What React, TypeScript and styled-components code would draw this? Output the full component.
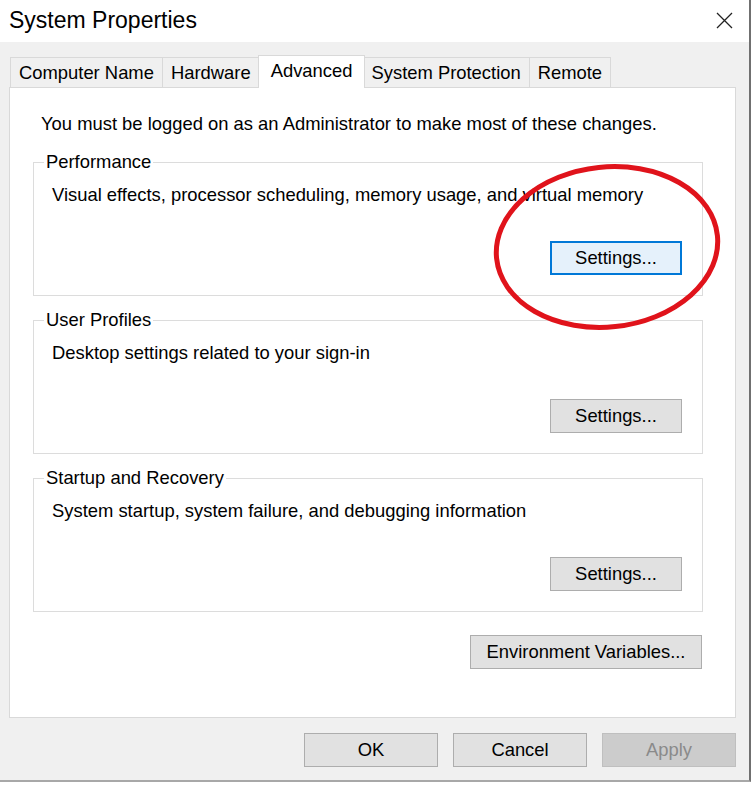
import React from 'react'
import styled, { createGlobalStyle } from 'styled-components'

const GlobalStyle = createGlobalStyle`
    html, body {
        margin: 0;
        padding: 0;
        background: #ffffff;
    }
    body {
        font-family: 'Liberation Sans', Arial, sans-serif;
        color: #000;
    }
`

const Window = styled.div`
    position: relative;
    width: 751px;
    height: 782px;
    box-sizing: border-box;
    border-right: 2px solid #707070;
    border-bottom: 2px solid #a8a8a8;
    display: flex;
    flex-direction: column;
`

const TitleBar = styled.div`
    height: 42px;
    flex-shrink: 0;
    background: #ffffff;
    display: flex;
    align-items: center;
    justify-content: space-between;
    padding: 0 16px 0 9px;
`

const Title = styled.div`
    font-size: 23px;
    color: #000;
    margin-top: -1px;
`

const CloseIcon = styled.svg`
    width: 17px;
    height: 17px;
    margin-top: -1px;
`

const Body = styled.div`
    flex: 1;
    background: #f0f0f0;
    padding: 13px 13px 13px 9px;
    display: flex;
    flex-direction: column;
`

const TabRow = styled.div`
    position: relative;
    z-index: 1;
    height: 33px;
    margin-bottom: -1px;
    padding-left: 2px;
    display: flex;
    align-items: flex-end;
`

const Tab = styled.div<{ $active?: boolean }>`
    position: relative;
    box-sizing: border-box;
    height: ${({ $active }) => ($active ? '33px' : '30px')};
    margin: ${({ $active }) => ($active ? '0 -2px 0 -2px' : '0 0 1px -1px')};
    z-index: ${({ $active }) => ($active ? 2 : 1)};
    padding: ${({ $active }) => ($active ? '0 12px 2px 12px' : '0 8px')};
    background: ${({ $active }) => ($active ? '#ffffff' : '#f0f0f0')};
    border: 1px solid #d9d9d9;
    border-bottom: none;
    display: flex;
    align-items: center;
    font-size: 18.4px;
    white-space: nowrap;
`

const Panel = styled.div`
    flex: 1;
    background: #ffffff;
    border: 1px solid #d9d9d9;
    padding: 26px 32px 0 23px;
    display: flex;
    flex-direction: column;
`

const Intro = styled.div`
    font-size: 18.4px;
    line-height: 20px;
    margin: 0 0 18px 8px;
    white-space: nowrap;
`

const Group = styled.fieldset`
    margin: 0 0 14px;
    padding: 0 20px 19px 18px;
    height: 144px;
    box-sizing: border-box;
    border: 1px solid #dcdcdc;
    min-width: 0;
`

const Legend = styled.legend`
    font-size: 18.4px;
    line-height: 20px;
    padding: 0 2px;
    margin-left: -8px;
    color: #000;
`

const Description = styled.div`
    font-size: 18.4px;
    line-height: 20px;
    margin: 13px 0 36px;
    white-space: nowrap;
`

const Button = styled.button<{ $variant?: 'default' | 'focused' | 'disabled'; $width?: number }>`
    box-sizing: border-box;
    display: block;
    width: ${({ $width }) => $width ?? 132}px;
    height: 34px;
    font-family: inherit;
    font-size: 18.4px;
    padding: 0;
    color: ${({ $variant }) => ($variant === 'disabled' ? '#8a8a8a' : '#000')};
    background: ${({ $variant }) =>
        $variant === 'focused' ? '#e5f1fb' : $variant === 'disabled' ? '#cccccc' : '#e1e1e1'};
    border: 1px solid
        ${({ $variant }) =>
            $variant === 'focused' ? '#0078d7' : $variant === 'disabled' ? '#bfbfbf' : '#adadad'};
    ${({ $variant }) => $variant === 'focused' && 'box-shadow: inset 0 0 0 1px #0078d7;'}
`

const GroupButton = styled(Button)`
    margin-left: auto;
`

const EnvButton = styled(Button)`
    margin-top: 9px;
    margin-right: 1px;
    align-self: flex-end;
`

const Footer = styled.div`
    display: flex;
    justify-content: flex-end;
    gap: 15px;
    margin-top: 15px;
`

const Annotation = styled.svg`
    position: absolute;
    left: 488px;
    top: 159px;
    width: 245px;
    height: 178px;
    pointer-events: none;
`

const tabs = ['Computer Name', 'Hardware', 'Advanced', 'System Protection', 'Remote']

const groups = [
    { title: 'Performance', text: 'Visual effects, processor scheduling, memory usage, and virtual memory', focused: true },
    { title: 'User Profiles', text: 'Desktop settings related to your sign-in' },
    { title: 'Startup and Recovery', text: 'System startup, system failure, and debugging information' },
]

export default function App() {
    return (
        <>
            <GlobalStyle />
            <Window>
                <TitleBar>
                    <Title>System Properties</Title>
                    <CloseIcon viewBox="0 0 17 17">
                        <path d="M1 1 L16 16 M16 1 L1 16" stroke="#222" strokeWidth="1.3" fill="none" />
                    </CloseIcon>
                </TitleBar>
                <Body>
                    <TabRow>
                        {tabs.map(name => (
                            <Tab key={name} $active={name === 'Advanced'}>
                                {name}
                            </Tab>
                        ))}
                    </TabRow>
                    <Panel>
                        <Intro>You must be logged on as an Administrator to make most of these changes.</Intro>
                        {groups.map(g => (
                            <Group key={g.title}>
                                <Legend>{g.title}</Legend>
                                <Description>{g.text}</Description>
                                <GroupButton $variant={g.focused ? 'focused' : 'default'}>Settings...</GroupButton>
                            </Group>
                        ))}
                        <EnvButton $width={232}>Environment Variables...</EnvButton>
                    </Panel>
                    <Footer>
                        <Button $width={134}>OK</Button>
                        <Button $width={134}>Cancel</Button>
                        <Button $width={134} $variant="disabled">
                            Apply
                        </Button>
                    </Footer>
                </Body>
                <Annotation viewBox="0 0 245 178">
                    <ellipse
                        cx="119"
                        cy="88"
                        rx="111"
                        ry="80"
                        transform="rotate(-6 119 88)"
                        fill="none"
                        stroke="#e0131b"
                        strokeWidth="5"
                    />
                </Annotation>
            </Window>
        </>
    )
}
